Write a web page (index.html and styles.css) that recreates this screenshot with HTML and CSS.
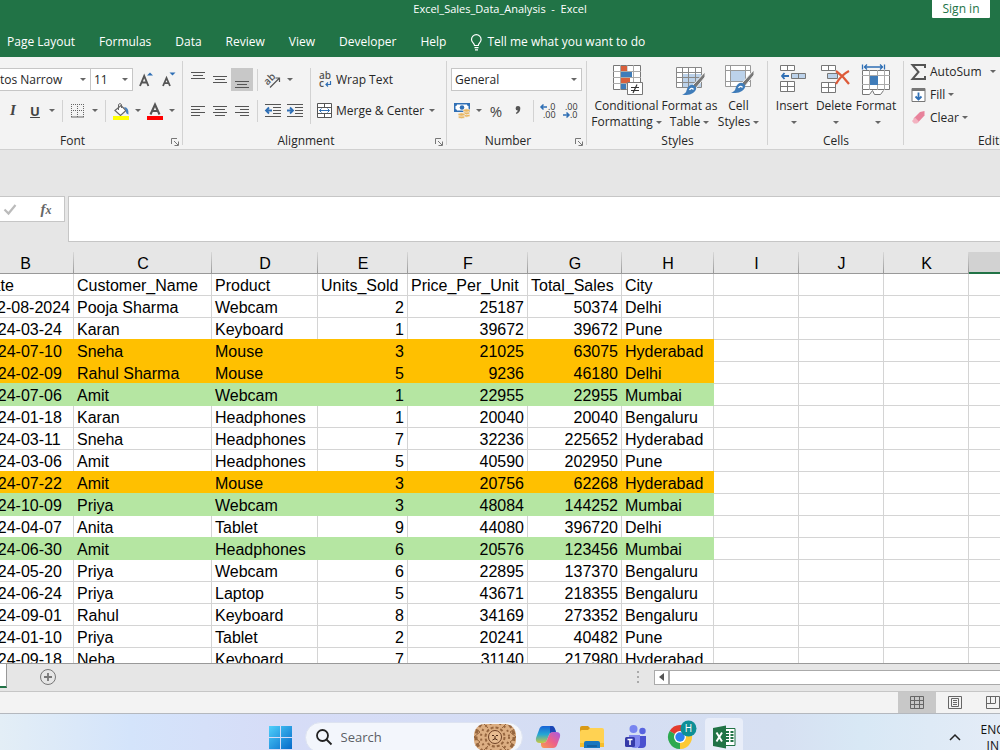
FILE: index.html
```
<!DOCTYPE html>
<html lang="en">
<head>
    <meta charset="UTF-8">
    <meta name="viewport" content="width=device-width, initial-scale=1.0">
    <title>Excel_Sales_Data_Analysis - Excel</title>
    <link rel="stylesheet" href="styles.css">
</head>
<body>
    <header class="app-header">
        <div class="title-bar">
            <div class="doc-title">Excel_Sales_Data_Analysis&nbsp; -&nbsp; Excel</div>
            <button class="sign-in">Sign in</button>
        </div>
        <nav class="tabs">
            <a href="#">Page Layout</a>
            <a href="#">Formulas</a>
            <a href="#">Data</a>
            <a href="#">Review</a>
            <a href="#">View</a>
            <a href="#">Developer</a>
            <a href="#">Help</a>
            <a href="#" class="tell-me">
                <svg width="13" height="17" viewBox="0 0 13 17" fill="none" stroke="#fff" stroke-width="1.2"><path d="M4.5 11.5C4.5 9 1.5 8.500 1.500 5.500a4.800 4.800 0 0 1 9.600 0C11.100 8.500 8.300 9 8.300 11.500zM4.500 13.700h4M5 15.800h3"/></svg>
                Tell me what you want to do
            </a>
        </nav>
    </header>

    <section class="ribbon">
        <!-- Font -->
        <div class="group group-font">
            <div class="group-body">
                <div class="row">
                    <select class="combo combo-font" aria-label="Font"><option>Aptos Narrow</option></select>
                    <select class="combo combo-size" aria-label="Font size"><option>11</option></select>
                    <button class="ib" aria-label="Increase font size">
                        <svg width="16" height="18" viewBox="0 0 16 18"><path d="M2 15L6.200 5l4.200 10M3.500 11.500h5.500" fill="none" stroke="#555" stroke-width="1.900"/><path d="M9 4.500L12 1.500 15 4.500z" fill="#2f6fb5"/></svg>
                    </button>
                    <button class="ib" aria-label="Decrease font size">
                        <svg width="16" height="18" viewBox="0 0 16 18"><path d="M3 15l3.500-8L10 15M4.300 12.200h4.500" fill="none" stroke="#555" stroke-width="1.800"/><path d="M9.500 1.500h6l-3 3z" fill="#2f6fb5"/></svg>
                    </button>
                </div>
                <div class="row">
                    <button class="ib glyph">B</button>
                    <button class="ib glyph italic">I</button>
                    <button class="ib glyph underline">U</button>
                    <button class="caret" aria-label="Underline options"></button>
                    <span class="sep"></span>
                    <button class="ib" aria-label="Borders">
                        <svg width="14" height="14" viewBox="0 0 14 14" fill="none" stroke="#666"><path stroke-dasharray="1 1" d="M0 .5h14M.5 0v13M6.500 0v13M12.500 0v13M0 6.500h14"/><path d="M0 13h13"/></svg>
                    </button>
                    <button class="caret" aria-label="Border options"></button>
                    <span class="sep"></span>
                    <button class="ib" aria-label="Fill color">
                        <svg width="18" height="18" viewBox="0 0 18 18"><path d="M3 8.500l6-5 5 5-5.500 5z" fill="#fff" stroke="#666" stroke-width="1.200"/><path d="M6.500 8V2.500q1.500-2 3 0V6" fill="none" stroke="#666"/><path d="M12 5q5 0 4.500 7.500Q13.500 12 14 8.500z" fill="#4a82bd"/><path fill="#ff0" d="M1 14h16v4H1z"/></svg>
                    </button>
                    <button class="caret" aria-label="Fill color options"></button>
                    <button class="ib" aria-label="Font color">
                        <svg width="18" height="18" viewBox="0 0 18 18"><path d="M4.500 12.500L9 2.500l4.500 10M6 9h6" fill="none" stroke="#555" stroke-width="2.100"/><path fill="#f00" d="M1 14h16v4H1z"/></svg>
                    </button>
                    <button class="caret" aria-label="Font color options"></button>
                </div>
            </div>
            <div class="group-label has-launcher">Font
                <button class="launcher" aria-label="Font settings"><svg width="8" height="8" viewBox="0 0 8 8" fill="none" stroke="#777"><path d="M.5 6V.5H6M3 3l4 4M7.500 3.500v4h-4"/></svg></button>
            </div>
        </div>

        <!-- Alignment -->
        <div class="group group-align">
            <div class="group-body split">
                <div>
                    <div class="row">
                        <button class="ib" aria-label="Top align"><svg width="14" height="16" viewBox="0 0 14 16" stroke="#555"><path d="M0 .5h14M2 3.500h10M0 6.500h14"/></svg></button>
                        <button class="ib" aria-label="Middle align"><svg width="14" height="16" viewBox="0 0 14 16" stroke="#555"><path d="M0 4.500h14M2 7.500h10M0 10.500h14"/></svg></button>
                        <button class="ib pressed" aria-label="Bottom align"><svg width="14" height="16" viewBox="0 0 14 16" stroke="#555"><path d="M0 9.500h14M2 12.500h10M0 15.500h14"/></svg></button>
                        <span class="sep"></span>
                        <button class="ib" aria-label="Orientation">
                            <svg width="18" height="16" viewBox="0 0 18 16"><text x="0" y="11" class="svg-ab" transform="rotate(-45 5 8)">ab</text><path d="M6 15.500L15.500 6M11.500 6h4v4" fill="none" stroke="#555" stroke-width="1.200"/></svg>
                        </button>
                        <button class="caret" aria-label="Orientation options"></button>
                    </div>
                    <div class="row">
                        <button class="ib" aria-label="Align left"><svg width="14" height="12" viewBox="0 0 14 12" stroke="#555"><path d="M0 1.500h14M0 4.500h9M0 7.500h14M0 10.500h9"/></svg></button>
                        <button class="ib" aria-label="Center"><svg width="14" height="12" viewBox="0 0 14 12" stroke="#555"><path d="M0 1.500h14M2 4.500h10M0 7.500h14M2 10.500h10"/></svg></button>
                        <button class="ib" aria-label="Align right"><svg width="14" height="12" viewBox="0 0 14 12" stroke="#555"><path d="M0 1.500h14M5 4.500h9M0 7.500h14M5 10.500h9"/></svg></button>
                        <span class="sep"></span>
                        <button class="ib" aria-label="Decrease indent"><svg width="16" height="14" viewBox="0 0 16 14"><path d="M0 .5h16M8 3.500h8M8 6.500h8M8 9.500h8M0 12.500h16" stroke="#555"/><path d="M7 6.500H1M4 3.500L1 6.500l3 3" fill="none" stroke="#2f6fb5" stroke-width="1.800"/></svg></button>
                        <button class="ib" aria-label="Increase indent"><svg width="16" height="14" viewBox="0 0 16 14"><path d="M0 .5h16M8 3.500h8M8 6.500h8M8 9.500h8M0 12.500h16" stroke="#555"/><path d="M0 6.500h6M3 3.500l3 3-3 3" fill="none" stroke="#2f6fb5" stroke-width="1.800"/></svg></button>
                    </div>
                </div>
                <span class="sep tall"></span>
                <div>
                    <div class="row">
                        <button class="text-btn">
                            <svg width="16" height="18" viewBox="0 0 16 18"><text x="2" y="8" class="svg-ab">ab</text><text x="2" y="16" class="svg-ab">c</text><path d="M13.500 10v3.500H9M11 11.500l-2 2 2 2" fill="none" stroke="#2f6fb5" stroke-width="1.200"/></svg>
                            Wrap Text
                        </button>
                    </div>
                    <div class="row">
                        <button class="text-btn">
                            <svg width="16" height="16" viewBox="0 0 16 16" fill="none" stroke="#555"><path fill="#fff" d="M.5.5h14v14H.5z"/><path d="M0 4.500h15M0 10.500h15M7.500 0v4M7.500 11v4"/><path d="M2.500 7.500h10M4.500 5.500l-2 2 2 2M10.500 5.500l2 2-2 2" stroke="#2f6fb5"/></svg>
                            Merge &amp; Center
                        </button>
                        <button class="caret" aria-label="Merge options"></button>
                    </div>
                </div>
            </div>
            <div class="group-label has-launcher">Alignment
                <button class="launcher" aria-label="Alignment settings"><svg width="8" height="8" viewBox="0 0 8 8" fill="none" stroke="#777"><path d="M.5 6V.5H6M3 3l4 4M7.500 3.500v4h-4"/></svg></button>
            </div>
        </div>

        <!-- Number -->
        <div class="group group-number">
            <div class="group-body">
                <div class="row">
                    <select class="combo combo-number" aria-label="Number format"><option>General</option></select>
                </div>
                <div class="row">
                    <button class="ib" aria-label="Accounting format">
                        <svg width="17" height="17" viewBox="0 0 17 17"><path fill="#2f6fb5" d="M0 1h16v9H0z"/><path fill="#fff" d="M3 2.500h10q0 1.500 1.500 1.500v3Q13 7 13 8.500H3Q3 7 1.500 7V4Q3 4 3 2.500z"/><circle cx="8" cy="5.500" r="2.300" fill="#2f6fb5"/><g fill="#e9b763" stroke="#f3f3f3" stroke-width=".7"><ellipse cx="12.500" cy="13.500" rx="3.500" ry="1.700"/><ellipse cx="12.500" cy="11" rx="3.500" ry="1.700"/><ellipse cx="12.500" cy="8.500" rx="3.500" ry="1.700"/><ellipse cx="7.500" cy="15" rx="3.500" ry="1.700"/><ellipse cx="7.500" cy="12.500" rx="3.500" ry="1.700"/></g></svg>
                    </button>
                    <button class="caret" aria-label="Accounting options"></button>
                    <button class="ib percent">%</button>
                    <button class="ib" aria-label="Comma style"><svg width="6" height="10" viewBox="0 0 6 10"><path d="M3 0a2.300 2.300 0 0 1 2.300 2.500Q5.300 6 1.500 8L.8 7Q2.700 5.800 2.800 4.600A2.300 2.300 0 0 1 3 0z" fill="#555"/></svg></button>
                    <span class="sep"></span>
                    <button class="ib" aria-label="Increase decimal">
                        <svg width="16" height="16" viewBox="0 0 16 16"><text x="7" y="7" class="svg-dec">.0</text><text x="2" y="15" class="svg-dec">.00</text><path d="M6 4H0M2.500 1.500L0 4l2.500 2.500" fill="none" stroke="#2f6fb5" stroke-width="1.500"/></svg>
                    </button>
                    <button class="ib" aria-label="Decrease decimal">
                        <svg width="16" height="16" viewBox="0 0 16 16"><text x="2" y="7" class="svg-dec">.00</text><text x="7" y="15" class="svg-dec">.0</text><path d="M0 12h6M3.500 9.500L6 12l-2.500 2.500" fill="none" stroke="#2f6fb5" stroke-width="1.500"/></svg>
                    </button>
                </div>
            </div>
            <div class="group-label has-launcher">Number
                <button class="launcher" aria-label="Number settings"><svg width="8" height="8" viewBox="0 0 8 8" fill="none" stroke="#777"><path d="M.5 6V.5H6M3 3l4 4M7.500 3.500v4h-4"/></svg></button>
            </div>
        </div>

        <!-- Styles -->
        <div class="group group-styles">
            <div class="big-body">
                <button class="big-btn big-wide">
                    <svg width="32" height="32" viewBox="0 0 32 32"><path d="M2.500 1.500h27v24h-27z" fill="#fff" stroke="#777"/><path d="M9.500 1v25M22.500 1v25M16 1v25M2 7.500h28M2 13.500h28M2 19.500h28" stroke="#aaa"/><path fill="#d9603b" d="M10 2h6v5h-6zM10 14h9v5h-9z"/><path fill="#3f7cb9" d="M10 8h11v5H10zM10 20h5v5h-5z"/><path d="M16.500 18.500h15v12h-15z" fill="#fff" stroke="#777"/><path d="M20 23.500h8M20 26.500h8M26 20.500l-4 8.500" stroke="#333" stroke-width="1.200"/></svg>
                    <span>Conditional</span>
                    <span>Formatting<i class="tri"></i></span>
                </button>
                <button class="big-btn big-mid">
                    <svg width="32" height="32" viewBox="0 0 32 32"><path d="M2.500 3.500h25v20h-25z" fill="#fff"/><path d="M9 10h18v13H9z" fill="#bcd2ea"/><path d="M2.500 3.500h25v20h-25zM8.500 3v20M14.500 3v20M21.500 3v20M2 8.500h25M2 13.500h25M2 18.500h25" stroke="#888" fill="none"/><path d="M31 8v5l-9 11-3-3z" fill="#777" stroke="#f3f3f3"/><path d="M15 22q4-3 7 1 1 3-3 6-4 3-11 1.500 4-1 4.500-4 .5-3 2.500-4.500z" fill="#3f7cb9"/><path d="M15.500 26q2-3 4-.500" fill="none" stroke="#fff" stroke-width="1.300"/></svg>
                    <span>Format as</span>
                    <span>Table<i class="tri"></i></span>
                </button>
                <button class="big-btn big-small">
                    <svg width="32" height="32" viewBox="0 0 32 32"><path d="M2.500 1.500h25v21h-25z" fill="#fff"/><path d="M7 7h15v11H7z" fill="#bcd2ea"/><path d="M2.500 1.500h25v21h-25zM7.500 1v21M22.500 1v21M2 6.500h25M2 17.500h25" stroke="#999" fill="none"/><path d="M31 6v5l-9 11-3-3z" fill="#777" stroke="#f3f3f3"/><path d="M15 20q4-3 7 1 1 3-3 6-4 3-11 1.500 4-1 4.500-4 .5-3 2.500-4.500z" fill="#3f7cb9"/><path d="M15.500 24q2-3 4-.500" fill="none" stroke="#fff" stroke-width="1.300"/></svg>
                    <span>Cell</span>
                    <span>Styles<i class="tri"></i></span>
                </button>
            </div>
            <div class="group-label">Styles</div>
        </div>

        <!-- Cells -->
        <div class="group group-cells">
            <div class="big-body">
                <button class="big-btn big-small">
                    <svg width="32" height="32" viewBox="0 0 32 32"><g fill="#fff" stroke="#777"><path d="M4.500 1.500h14v5h-14zM11.500 1.500v5M4.500 17.500h14v10h-14zM11.500 17.500v10M4.500 22.500h14"/><path d="M15.500 9.500h14v5h-14z" fill="#bcd2ea"/><path d="M22.500 9.500v5"/></g><path d="M13 12H6M8.500 9L6 12l2.500 3" fill="none" stroke="#2f6fb5" stroke-width="1.800"/></svg>
                    <span>Insert</span>
                    <span><i class="tri"></i></span>
                </button>
                <button class="big-btn big-small">
                    <svg width="32" height="32" viewBox="0 0 32 32"><g fill="#fff" stroke="#777"><path d="M3.500 1.500h14v5h-14zM10.500 1.500v5M3.500 18.500h14v10h-14zM10.500 18.500v10M3.500 23.500h14"/><path d="M9.500 9.500h10v5h-10z" fill="#bcd2ea"/></g><path d="M18 7q7 5 13 13M31 7q-8 4-13 13" fill="none" stroke="#dd5a38" stroke-width="2.200"/></svg>
                    <span>Delete</span>
                    <span><i class="tri"></i></span>
                </button>
                <button class="big-btn big-small">
                    <svg width="32" height="32" viewBox="0 0 32 32"><path d="M2.500 6.500h27v19h-27z" fill="#fff" stroke="#777"/><path d="M9.500 6v20M17.500 6v20M24.500 6v20M2 11.500h28M2 20.500h28" stroke="#aaa"/><path d="M10 12h8v9h-8z" fill="#3f7cb9"/><path d="M2.500 26v4.500h7l3-4 2 4h6l3-4" stroke="#777" fill="#fff"/><path d="M2.500.5v5M24.500.5v5M4 3h19M7 .5L4.500 3 7 5.500M20 .5L22.500 3 20 5.500" fill="none" stroke="#2f6fb5" stroke-width="1.300"/></svg>
                    <span>Format</span>
                    <span><i class="tri"></i></span>
                </button>
            </div>
            <div class="group-label">Cells</div>
        </div>

        <!-- Editing -->
        <div class="group group-editing">
            <div class="edit-body">
                <button class="text-btn">
                    <svg width="16" height="16" viewBox="0 0 16 16"><path d="M14 4V1H1.500l6 7-6 7H14v-3" fill="none" stroke="#555" stroke-width="2"/></svg>
                    AutoSum<i class="tri tri-far"></i>
                </button>
                <button class="text-btn">
                    <svg width="16" height="16" viewBox="0 0 16 16"><path d="M1 1.500h13v13H1z" fill="#fff" stroke="#777"/><path fill="#777" d="M1 1h13v3H1z"/><path d="M7.500 5.500v7M4.500 9.500l3 3 3-3" fill="none" stroke="#2f6fb5" stroke-width="1.800"/></svg>
                    Fill<i class="tri"></i>
                </button>
                <button class="text-btn">
                    <svg width="16" height="16" viewBox="0 0 16 16"><path d="M9 2l4.500-1v4.500L7 12.500 2.500 8.500z" fill="#e8829b"/><path d="M4 7.500l4 4-2 2H3L1 11z" fill="#f3b3c1"/></svg>
                    Clear<i class="tri"></i>
                </button>
            </div>
            <div class="group-label">Editing</div>
        </div>
    </section>

    <section class="formula-bar">
        <div class="formula-tools">
            <button aria-label="Enter"><svg width="14" height="12" viewBox="0 0 14 12"><path d="M1.500 6.500l4 4L12.500 2" fill="none" stroke="#bbb" stroke-width="2.200"/></svg></button>
            <button class="fx" aria-label="Insert function">f<small>x</small></button>
        </div>
        <textarea class="formula-input" aria-label="Formula"></textarea>
    </section>

    <main class="sheet">
        <table>
            <colgroup>
                <col class="col-b"><col class="col-c"><col class="col-d"><col class="col-e"><col class="col-f"><col class="col-g"><col class="col-h"><col class="col-blank"><col class="col-blank"><col class="col-blank"><col>
            </colgroup>
            <thead>
                <tr><th>B</th><th>C</th><th>D</th><th>E</th><th>F</th><th>G</th><th>H</th><th>I</th><th>J</th><th>K</th><th class="selected"></th></tr>
            </thead>
            <tbody>
                <tr><td>Date</td><td>Customer_Name</td><td>Product</td><td>Units_Sold</td><td>Price_Per_Unit</td><td>Total_Sales</td><td>City</td><td></td><td></td><td></td><td></td></tr>
                <tr><td class="num">12-08-2024</td><td>Pooja Sharma</td><td>Webcam</td><td class="num">2</td><td class="num">25187</td><td class="num">50374</td><td>Delhi</td><td></td><td></td><td></td><td></td></tr>
                <tr><td>2024-03-24</td><td>Karan</td><td>Keyboard</td><td class="num">1</td><td class="num">39672</td><td class="num">39672</td><td>Pune</td><td></td><td></td><td></td><td></td></tr>
                <tr class="orange"><td>2024-07-10</td><td>Sneha</td><td>Mouse</td><td class="num">3</td><td class="num">21025</td><td class="num">63075</td><td>Hyderabad</td><td></td><td></td><td></td><td></td></tr>
                <tr class="orange"><td>2024-02-09</td><td>Rahul Sharma</td><td>Mouse</td><td class="num">5</td><td class="num">9236</td><td class="num">46180</td><td>Delhi</td><td></td><td></td><td></td><td></td></tr>
                <tr class="green"><td>2024-07-06</td><td>Amit</td><td>Webcam</td><td class="num">1</td><td class="num">22955</td><td class="num">22955</td><td>Mumbai</td><td></td><td></td><td></td><td></td></tr>
                <tr><td>2024-01-18</td><td>Karan</td><td>Headphones</td><td class="num">1</td><td class="num">20040</td><td class="num">20040</td><td>Bengaluru</td><td></td><td></td><td></td><td></td></tr>
                <tr><td>2024-03-11</td><td>Sneha</td><td>Headphones</td><td class="num">7</td><td class="num">32236</td><td class="num">225652</td><td>Hyderabad</td><td></td><td></td><td></td><td></td></tr>
                <tr><td>2024-03-06</td><td>Amit</td><td>Headphones</td><td class="num">5</td><td class="num">40590</td><td class="num">202950</td><td>Pune</td><td></td><td></td><td></td><td></td></tr>
                <tr class="orange"><td>2024-07-22</td><td>Amit</td><td>Mouse</td><td class="num">3</td><td class="num">20756</td><td class="num">62268</td><td>Hyderabad</td><td></td><td></td><td></td><td></td></tr>
                <tr class="green"><td>2024-10-09</td><td>Priya</td><td>Webcam</td><td class="num">3</td><td class="num">48084</td><td class="num">144252</td><td>Mumbai</td><td></td><td></td><td></td><td></td></tr>
                <tr><td>2024-04-07</td><td>Anita</td><td>Tablet</td><td class="num">9</td><td class="num">44080</td><td class="num">396720</td><td>Delhi</td><td></td><td></td><td></td><td></td></tr>
                <tr class="green"><td>2024-06-30</td><td>Amit</td><td>Headphones</td><td class="num">6</td><td class="num">20576</td><td class="num">123456</td><td>Mumbai</td><td></td><td></td><td></td><td></td></tr>
                <tr><td>2024-05-20</td><td>Priya</td><td>Webcam</td><td class="num">6</td><td class="num">22895</td><td class="num">137370</td><td>Bengaluru</td><td></td><td></td><td></td><td></td></tr>
                <tr><td>2024-06-24</td><td>Priya</td><td>Laptop</td><td class="num">5</td><td class="num">43671</td><td class="num">218355</td><td>Bengaluru</td><td></td><td></td><td></td><td></td></tr>
                <tr><td>2024-09-01</td><td>Rahul</td><td>Keyboard</td><td class="num">8</td><td class="num">34169</td><td class="num">273352</td><td>Bengaluru</td><td></td><td></td><td></td><td></td></tr>
                <tr><td>2024-01-10</td><td>Priya</td><td>Tablet</td><td class="num">2</td><td class="num">20241</td><td class="num">40482</td><td>Pune</td><td></td><td></td><td></td><td></td></tr>
                <tr><td>2024-09-18</td><td>Neha</td><td>Keyboard</td><td class="num">7</td><td class="num">31140</td><td class="num">217980</td><td>Hyderabad</td><td></td><td></td><td></td><td></td></tr>
            </tbody>
        </table>
    </main>

    <div class="sheet-bar">
        <div class="sheet-tab"></div>
        <button class="add-sheet" aria-label="New sheet"><svg width="18" height="18" viewBox="0 0 18 18"><circle cx="9" cy="9" r="7.500" fill="none" stroke="#777"/><path d="M9 5v8M5 9h8" stroke="#777" stroke-width="1.800"/></svg></button>
        <div class="scroll-area">
            <svg class="grip" width="3" height="12" viewBox="0 0 3 12" fill="#aaa"><path d="M0 0h2v2H0zM0 5h2v2H0zM0 10h2v2H0z"/></svg>
            <div class="scrollbar">
                <button aria-label="Scroll left"><svg width="5" height="8" viewBox="0 0 5 8"><path d="M5 0v8L0 4z" fill="#555"/></svg></button>
            </div>
        </div>
    </div>

    <div class="status-bar">
        <button class="view-btn active" aria-label="Normal"><svg width="14" height="14" viewBox="0 0 14 14" fill="none" stroke="#666"><path d="M.5.5h13v12H.5zM4.500.5v12M9.500.5v12M0 4.500h13M0 8.500h13"/></svg></button>
        <button class="view-btn" aria-label="Page layout"><svg width="14" height="14" viewBox="0 0 14 14" fill="none" stroke="#666"><path d="M.5.5h13v12H.5zM3.500 2.500h7v8h-7zM5 4.500h4M5 6.500h4M5 8.500h4"/></svg></button>
        <button class="view-btn" aria-label="Page break preview"><svg width="14" height="14" viewBox="0 0 14 14" fill="none" stroke="#666"><path d="M.5.5h13v12H.5zM4.500 1v6.500M9.500 1v6.500M0 7.500h9"/></svg></button>
    </div>

    <footer class="taskbar">
        <div class="taskbar-row">
            <div class="apps">
                <button class="task-btn" aria-label="Start">
                    <svg width="24" height="24" viewBox="0 0 24 24"><defs><linearGradient id="win" x1="0" y1="0" x2="1" y2="1"><stop offset="0" stop-color="#4fd0fb"/><stop offset="1" stop-color="#0669c9"/></linearGradient></defs><path fill="url(#win)" d="M0 1h11v11H0zM12 1h11v11H12zM0 13h11v11H0zM12 13h11v11H12z"/></svg>
                </button>
                <div class="search">
                    <svg width="18" height="18" viewBox="0 0 18 18" fill="none" stroke="#222" stroke-width="1.800"><circle cx="7.500" cy="7.500" r="5.500"/><path d="M11.500 11.500l5 5"/></svg>
                    <input type="text" placeholder="Search" aria-label="Search">
                    <!-- lion mandala -->
                    <svg width="42" height="28" viewBox="0 0 42 28"><defs><clipPath id="lion"><rect x="0" y="1" width="42" height="27" rx="11"/></clipPath></defs><g clip-path="url(#lion)"><path fill="#dcae82" d="M0 0h42v28H0z"/><g fill="none" stroke="#96663f"><circle cx="21" cy="14" r="19" stroke-width="3" stroke-dasharray="4 3"/><circle cx="21" cy="14" r="14" stroke-width="2" stroke-dasharray="2 3"/><circle cx="21" cy="14" r="9.500" stroke-width="2" stroke-dasharray="3 2"/><path d="M0 5l6 4-6 5 6 5-6 5M42 5l-6 4 6 5-6 5 6 5M10 1l4 4M32 1l-4 4M10 27l4-4M32 27l-4-4"/></g><circle cx="21" cy="14" r="6.500" fill="#e8bd91" stroke="#6f4125"/><path d="M18 12.500h2M22 12.500h2M21 13v3M18.500 17q2.500-2.500 5 0" stroke="#4d2a17" fill="none"/></g></svg>
                </div>
                <button class="task-btn" aria-label="Copilot">
                    <svg width="26" height="24" viewBox="0 0 26 24"><defs><linearGradient id="cp1" x1="0" y1="0" x2="0" y2="1"><stop offset="0" stop-color="#1763d8"/><stop offset=".5" stop-color="#25a7d3"/><stop offset="1" stop-color="#c9c83f"/></linearGradient><linearGradient id="cp2" x1="1" y1="0" x2="0" y2="1"><stop offset="0" stop-color="#a45be6"/><stop offset=".5" stop-color="#ed618a"/><stop offset="1" stop-color="#f79b4d"/></linearGradient></defs><path d="M8 1h9q2 0 3 3l1 3h-3q-3 0-4 3l-2 5q-1 3-4 3H5q-5 0-4-5L4 5q1-4 4-4z" fill="url(#cp1)"/><path d="M18 7h3q5 0 4 5l-3 8q-1 3-4 3H9q-3 0-3-4v-1h2q3 0 4-3l2-5q1-3 4-3z" fill="url(#cp2)"/><path d="M15 1h2q2 0 3 3l1 3h-3q-2 0-3 1z" fill="#1b45b5"/></svg>
                </button>
                <button class="task-btn" aria-label="File Explorer">
                    <svg width="24" height="24" viewBox="0 0 24 24"><path fill="#d99a17" d="M0 3q0-2 2-2h6l3 3v4H0z"/><path fill="#ffd252" d="M0 7q0-2 2-2h6l2-2h12q2 0 2 2v17H0z"/><path fill="#f6bd2c" d="M0 18h24v4H0z"/><path fill="#1976bf" d="M4 18q0-2 2-2h12q2 0 2 2v5H4z"/><path fill="#1560a0" d="M7 20h10v2H7z"/></svg>
                </button>
                <button class="task-btn" aria-label="Teams">
                    <svg width="24" height="24" viewBox="0 0 24 24"><circle cx="18.500" cy="6" r="3.200" fill="#5864df"/><path fill="#4a51cf" d="M14 11h8v8q0 4-4 4h-4z"/><circle cx="9.500" cy="4" r="4" fill="#7885f0"/><path fill="#8188f0" d="M5 10h11v9q0 4-5 4T5 18z"/><rect x="1" y="12" width="10" height="10" rx="1.500" fill="#353aa9"/><path d="M3.500 14.500h5M6 14.500V20" stroke="#fff" stroke-width="1.500"/></svg>
                </button>
                <button class="task-btn" aria-label="Chrome">
                    <svg width="26" height="34" viewBox="0 0 26 34"><path fill="#e33b2e" d="M13 17L2.600 11a12 12 0 0 1 20.800 0z"/><path fill="#2da94f" d="M13 17v12A12 12 0 0 1 2.600 11z"/><path fill="#fcc934" d="M13 17l10.400-6A12 12 0 0 1 13 29z"/><circle cx="13" cy="17" r="6" fill="#fff"/><circle cx="13" cy="17" r="4.700" fill="#2d7ff0"/><circle cx="21.500" cy="8.500" r="8" fill="#0e8f96"/><text x="21.500" y="12" class="badge-text">H</text></svg>
                </button>
                <button class="task-btn task-active" aria-label="Excel">
                    <svg width="24" height="24" viewBox="0 0 24 24"><path d="M12 3.500h11v17H12z" fill="#fff" stroke="#217346"/><path d="M14 7h3M18.500 7h3M14 10h3M18.500 10h3M14 13h3M18.500 13h3M14 16h3M18.500 16h3" stroke="#217346" stroke-width="1.800"/><path fill="#217346" d="M1 3l13-2.500v23L1 21z"/><path d="M4.500 7.500l5.500 9M10 7.500l-5.500 9" stroke="#fff" stroke-width="1.900"/></svg>
                </button>
            </div>
            <div class="tray">
                <button class="task-btn" aria-label="Show hidden icons"><svg width="12" height="8" viewBox="0 0 12 8"><path d="M1 7l5-5 5 5" fill="none" stroke="#222" stroke-width="1.500"/></svg></button>
                <div class="lang">ENG<br>IN</div>
            </div>
        </div>
    </footer>
</body>
</html>
```
FILE: styles.css
```
* {
    box-sizing: border-box;
}
html {
    overflow: hidden;
}
body {
    margin: 0;
    height: 100vh;
    display: flex;
    flex-direction: column;
    overflow: hidden;
    background: #e6e6e6;
    font-family: "Open Sans", "Noto Sans", sans-serif;
    font-size: 12px;
    color: #262626;
}
button, select, input, textarea {
    font: inherit;
    color: inherit;
}
button {
    padding: 0;
    border: none;
    background: none;
    white-space: nowrap;
}
svg {
    flex: none;
    display: block;
    overflow: visible;
}

/* header */
.app-header {
    flex: none;
    height: 57px;
    background: #217346;
    color: #fff;
}
.title-bar {
    display: grid;
    grid-template-columns: 1fr auto 1fr;
    height: 18px;
    line-height: 18px;
}
.doc-title {
    grid-column: 2;
    font-size: 11px;
}
.sign-in {
    justify-self: end;
    width: 58px;
    margin-right: 10px;
    background: #fff;
    color: #217346;
    border-radius: 0 0 1px 1px;
}
.tabs {
    display: flex;
    gap: 24px;
    padding: 14px 7px 0;
    line-height: 20px;
    white-space: nowrap;
}
.tabs a {
    color: #fff;
    text-decoration: none;
}
.tabs .tell-me {
    display: flex;
    align-items: center;
    gap: 4px;
}

/* ribbon */
.ribbon {
    flex: none;
    display: flex;
    height: 93px;
    margin-left: -20px;
    overflow: hidden;
    background: #f3f3f3;
    border-bottom: 1px solid #d0d0d0;
}
.group {
    position: relative;
    flex: none;
    display: flex;
    flex-direction: column;
    justify-content: space-between;
}
.group::after {
    content: "";
    position: absolute;
    top: 4px;
    right: 0;
    bottom: 4px;
    width: 1px;
    background: #d2d2d2;
}
.group-font {
    width: 203px;
}
.group-align {
    width: 264px;
}
.group-number {
    width: 140px;
}
.group-styles {
    width: 181px;
}
.group-cells {
    width: 136px;
}
.group-editing {
    width: 186px;
}
.group-body {
    padding: 11px 4px 0;
}
.group-font .group-body {
    padding-left: 0;
    padding-right: 0;
}
.group-body.split {
    display: flex;
    padding-right: 0;
}
.row {
    display: flex;
    align-items: center;
    height: 23px;
    margin-bottom: 8px;
}
.ib {
    display: flex;
    align-items: center;
    justify-content: center;
    width: 22px;
    height: 23px;
}
.ib.pressed {
    background: #c8c8c8;
}
.caret {
    display: flex;
    align-items: center;
    justify-content: center;
    width: 12px;
    height: 23px;
}
.caret::after, .tri {
    content: "";
    display: inline-block;
    border: 3px solid transparent;
    border-top-color: #666;
    border-bottom: none;
}
.tri {
    margin-left: 3px;
    vertical-align: 2px;
}
.sep {
    width: 1px;
    height: 22px;
    margin: 0 4px;
    background: #d2d2d2;
}
.sep.tall {
    height: 56px;
    margin: 0 6px 0 4px;
}
.combo {
    height: 23px;
    padding: 0 4px;
    border: 1px solid #c6c6c6;
    border-radius: 0;
    appearance: none;
    background: #fff url("data:image/svg+xml;charset=UTF-8,%3csvg xmlns='http://www.w3.org/2000/svg' viewBox='0 0 6 3'%3e%3cpath d='M0 0h6L3 3z' fill='%23666'/%3e%3c/svg%3e") no-repeat right 4px center;
    background-size: 6px 3px;
}
.combo-font {
    width: 111px;
}
.combo-size {
    width: 43px;
    margin-right: 2px;
    margin-left: -1px;
    padding: 0 3px;
}
.combo-number {
    width: 131px;
    padding: 0 3px;
}
.glyph {
    font-family: "Liberation Serif", serif;
    font-size: 15px;
    font-weight: bold;
    color: #444;
}
.italic {
    font-style: italic;
}
.underline {
    font-family: "Open Sans", sans-serif;
    font-size: 13px;
    text-decoration: underline;
}
.percent {
    font-size: 15px;
    color: #444;
}
.svg-ab {
    font-size: 10px;
    font-weight: 600;
    fill: #555;
}
.svg-dec {
    font-size: 9px;
    fill: #333;
}
.text-btn {
    display: flex;
    align-items: center;
    gap: 3px;
    height: 23px;
}
.group-align .text-btn + .caret {
    margin-left: 2px;
}
.group-label {
    height: 16px;
    line-height: 16px;
    text-align: center;
}
.has-launcher {
    padding-right: 18px;
}
.launcher {
    position: absolute;
    right: 4px;
    bottom: 3px;
}
.big-body {
    display: flex;
    justify-content: center;
    padding-top: 7px;
}
.big-btn {
    display: flex;
    flex-direction: column;
    align-items: center;
    line-height: 16px;
}
.big-btn svg {
    margin-bottom: 2px;
}
.big-btn span {
    height: 16px;
}
.big-wide {
    width: 70px;
}
.big-mid {
    width: 56px;
}
.big-small {
    width: 42px;
}
.group-styles .big-body, .group-cells .big-body {
    padding-right: 4px;
}
.edit-body {
    padding: 3px 0 0 7px;
}
.edit-body .tri {
    margin-left: 0;
}
.edit-body .tri-far {
    margin-left: 5px;
}

/* formula bar */
.formula-bar {
    flex: none;
    display: flex;
    align-items: flex-start;
    gap: 3px;
    padding: 46px 0 10px;
}
.formula-tools {
    display: flex;
    align-items: center;
    gap: 20px;
    width: 65px;
    height: 26px;
    padding-left: 3px;
    background: #fff;
    border: 1px solid #c6c6c6;
    border-left: none;
}
.fx {
    width: 18px;
    font: italic bold 15px "Liberation Serif", serif;
    color: #666;
}
.fx small {
    font-size: 12px;
}
.formula-input {
    flex: 1;
    height: 46px;
    border: 1px solid #c6c6c6;
    border-right: none;
    resize: none;
    background: #fff;
}

/* sheet */
.sheet {
    flex: 1;
    min-height: 0;
    overflow: hidden;
    border-bottom: 1px solid #999;
    font-family: "Liberation Sans", Arial, sans-serif;
    font-size: 16px;
    color: #000;
}
.sheet table {
    width: calc(100% + 23px);
    margin-left: -23px;
    table-layout: fixed;
    border-collapse: separate;
    border-spacing: 0;
}
.col-b {
    width: 97px;
}
.col-c {
    width: 138px;
}
.col-d {
    width: 106px;
}
.col-e {
    width: 90px;
}
.col-f {
    width: 120px;
}
.col-g {
    width: 94px;
}
.col-h {
    width: 92px;
}
.col-blank {
    width: 85px;
}
.sheet th, .sheet td {
    height: 22px;
    padding: 3px 3px 0;
    line-height: 18px;
    white-space: nowrap;
}
.sheet th {
    font-weight: normal;
    border-bottom: 1px solid #999;
    background: linear-gradient(#d8d8d8, #999) no-repeat right / 1px 100%;
}
.sheet th.selected {
    padding-top: 2px;
    background: #d2d2d2;
    border-bottom: 2px solid #217346;
}
.sheet td {
    background: #fff;
    border-right: 1px solid #d4d4d4;
    border-bottom: 1px solid #d4d4d4;
}
.sheet td:last-child {
    border-right: none;
}
.sheet .num {
    text-align: right;
}
.orange td:nth-child(-n+7) {
    background: #ffc000;
    border-color: #ffc000;
    box-shadow: 0 -1px #ffc000;
}
.green td:nth-child(-n+7) {
    background: #b5e6a2;
    border-color: #b5e6a2;
    box-shadow: 0 -1px #b5e6a2;
}

/* sheet tabs */
.sheet-bar {
    flex: none;
    display: flex;
    align-items: center;
    height: 28px;
    padding-bottom: 1px;
    border-bottom: 1px solid #c6c6c6;
}
.sheet-tab {
    align-self: flex-start;
    width: 7px;
    height: 24px;
    background: #fff;
    border-right: 1px solid #999;
    border-bottom: 2px solid #217346;
}
.add-sheet {
    margin-left: 32px;
}
.scroll-area {
    display: flex;
    align-items: center;
    gap: 14px;
    width: 363px;
    margin-left: auto;
}
.scrollbar {
    flex: 1;
    display: flex;
    height: 15px;
    border: 1px solid #aaa;
    border-right: none;
    background: #fff;
}
.scrollbar button {
    display: flex;
    align-items: center;
    justify-content: center;
    width: 15px;
    border-right: 2px solid #aaa;
}

/* status bar */
.status-bar {
    flex: none;
    display: flex;
    justify-content: flex-end;
    height: 22px;
    margin-right: -12px;
    background: #f3f3f3;
    border-bottom: 1px solid #b4b8be;
}
.view-btn {
    display: flex;
    align-items: center;
    justify-content: center;
    width: 38px;
}
.view-btn.active {
    background: #c8c8c8;
}

/* taskbar */
.taskbar {
    flex: none;
    height: 36px;
    overflow: hidden;
    background: linear-gradient(90deg, #e3eef6, #d4e4fb 13%, #d6dcf7 28%, #d5def3 60%, #d6e0f2 78%, #d8e8f5 86%, #e4ecf7);
}
.taskbar-row {
    display: grid;
    grid-template-columns: 1fr auto 1fr;
    align-items: center;
    height: 46px;
}
.apps {
    grid-column: 2;
    display: flex;
    align-items: center;
    padding-left: 11px;
}
.task-btn {
    display: flex;
    align-items: center;
    justify-content: center;
    min-width: 24px;
    height: 38px;
}
.apps .task-btn:nth-child(n+3) {
    width: 44px;
}
.apps .task-active:last-child {
    width: 38px;
    margin-left: 3px;
    background: #e9eef9;
    border-radius: 4px;
}
.search {
    display: flex;
    align-items: center;
    gap: 8px;
    width: 218px;
    height: 31px;
    margin: 0 3px 0 12px;
    padding: 0 6px 0 9px;
    border: 1px solid #dde3f1;
    border-radius: 16px;
    background: #f3f6fc;
}
.search input {
    flex: 1;
    min-width: 0;
    padding: 0;
    border: none;
    outline: none;
    background: none;
    font-size: 13px;
}
.search input::placeholder {
    color: #5c5f66;
}
.badge-text {
    font-size: 10px;
    fill: #fff;
    text-anchor: middle;
}
.tray {
    justify-self: end;
    display: flex;
    align-items: center;
    gap: 14px;
    margin-right: -5px;
    color: #111;
}
.lang {
    padding-top: 2px;
    text-align: center;
    line-height: 16px;
}
```
